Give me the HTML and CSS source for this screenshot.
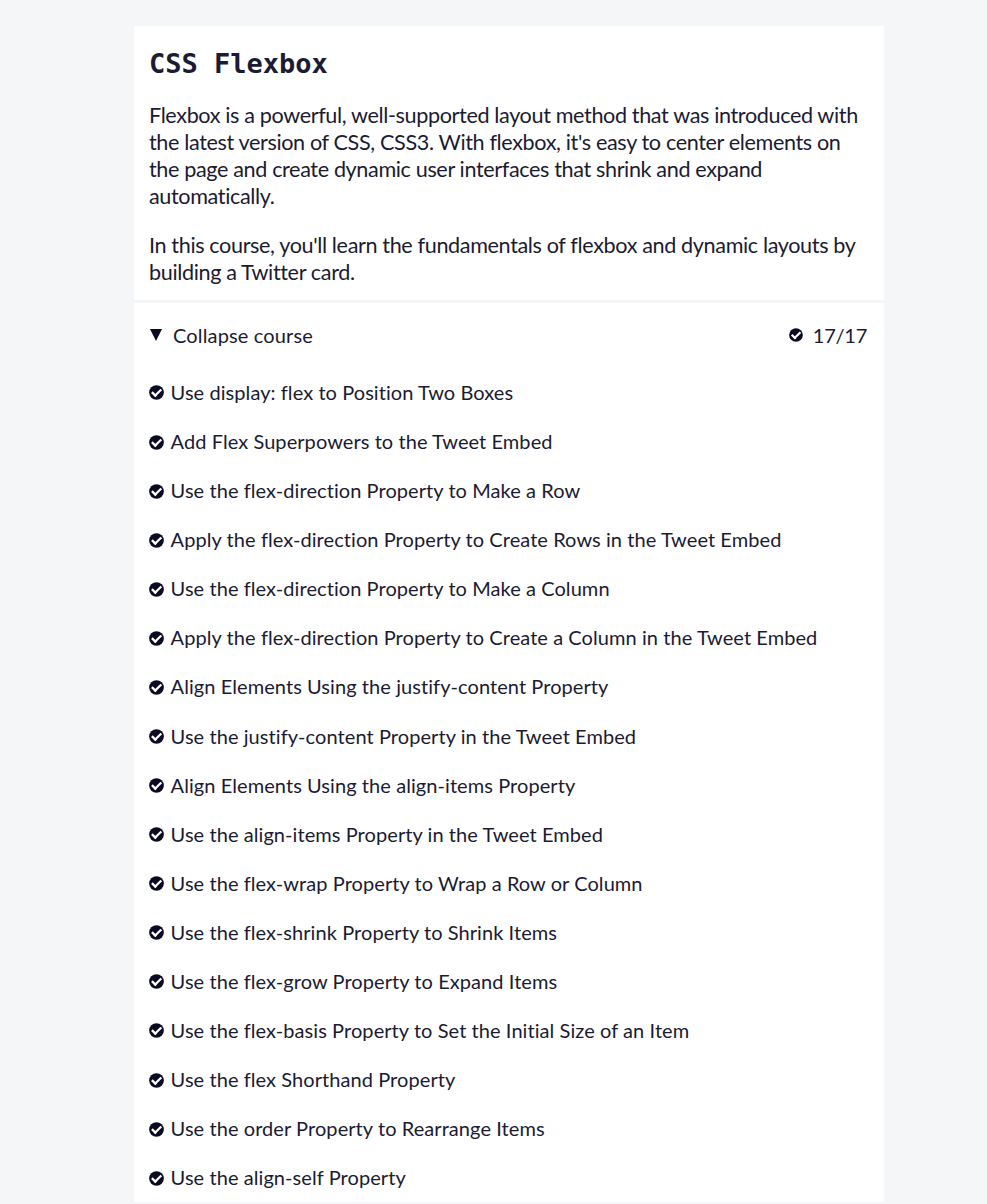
FILE: index.html
```html
<!DOCTYPE html>
<html lang="en">
<head>
<meta charset="utf-8">
<title>CSS Flexbox</title>
<link rel="stylesheet" href="styles.css">
</head>
<body>
<svg class="defs" aria-hidden="true">
<symbol id="check" viewBox="0 0 200 200"><circle cx="100" cy="100" r="98" fill="currentColor"/><g fill="#fff"><rect x="55.570" y="89.320" width="128.850" height="30" transform="rotate(-45 120 106.320)"/><rect x="51.750" y="83.420" width="30" height="80.660" transform="rotate(-45 66.750 123.750)"/></g></symbol>
</svg>
<main class="block">
<header class="intro">
<h1 class="title">CSS Flexbox</h1>
<p>Flexbox is a powerful, well-supported layout method that was introduced with the latest version of CSS, CSS3. With flexbox, it's easy to center elements on the page and create dynamic user interfaces that shrink and expand automatically.</p>
<p>In this course, you'll learn the fundamentals of flexbox and dynamic layouts by building a Twitter card.</p>
</header>
<section class="course">
<div class="toggle"><svg class="caret" viewBox="0 0 12 12"><path d="M0 0H12L6 12Z" fill="currentColor"/></svg><span class="label">Collapse course</span><span class="count"><svg class="check small"><use href="#check"/></svg><span class="label">17/17</span></span></div>
<ul class="list">
<li><svg class="check"><use href="#check"/></svg><span>Use display: flex to Position Two Boxes</span></li>
<li><svg class="check"><use href="#check"/></svg><span>Add Flex Superpowers to the Tweet Embed</span></li>
<li><svg class="check"><use href="#check"/></svg><span>Use the flex-direction Property to Make a Row</span></li>
<li><svg class="check"><use href="#check"/></svg><span>Apply the flex-direction Property to Create Rows in the Tweet Embed</span></li>
<li><svg class="check"><use href="#check"/></svg><span>Use the flex-direction Property to Make a Column</span></li>
<li><svg class="check"><use href="#check"/></svg><span>Apply the flex-direction Property to Create a Column in the Tweet Embed</span></li>
<li><svg class="check"><use href="#check"/></svg><span>Align Elements Using the justify-content Property</span></li>
<li><svg class="check"><use href="#check"/></svg><span>Use the justify-content Property in the Tweet Embed</span></li>
<li><svg class="check"><use href="#check"/></svg><span>Align Elements Using the align-items Property</span></li>
<li><svg class="check"><use href="#check"/></svg><span>Use the align-items Property in the Tweet Embed</span></li>
<li><svg class="check"><use href="#check"/></svg><span>Use the flex-wrap Property to Wrap a Row or Column</span></li>
<li><svg class="check"><use href="#check"/></svg><span>Use the flex-shrink Property to Shrink Items</span></li>
<li><svg class="check"><use href="#check"/></svg><span>Use the flex-grow Property to Expand Items</span></li>
<li><svg class="check"><use href="#check"/></svg><span>Use the flex-basis Property to Set the Initial Size of an Item</span></li>
<li><svg class="check"><use href="#check"/></svg><span>Use the flex Shorthand Property</span></li>
<li><svg class="check"><use href="#check"/></svg><span>Use the order Property to Rearrange Items</span></li>
<li><svg class="check"><use href="#check"/></svg><span>Use the align-self Property</span></li>
</ul>
</section>
</main>
</body>
</html>
```
FILE: styles.css
```css
* { box-sizing: border-box; }
body {
  margin: 0;
  height: 1204px;
  overflow: hidden;
  background: #f5f6f7;
  color: #1b1b32;
  font-family: Lato, sans-serif;
}
.defs { display: none; }
.block { width: 750px; margin: 26px auto 0 134px; }
.intro { height: 274px; padding: 21px 15px 0; background: #fff; }
.title {
  margin: 0 0 21px;
  font: bold 27px/34px "DejaVu Sans Mono", monospace;
}
.intro p { margin: 0 0 22px; font-size: 21.600px; line-height: 27px; letter-spacing: -0.370px; }
.course { margin-top: 3px; height: 899px; background: #fff; font-size: 20px; letter-spacing: 0.070px; }
.toggle { display: flex; align-items: center; height: 65px; padding: 0 17px 0 15px; }
.label { padding-bottom: 2px; letter-spacing: 0.150px; }
.caret { width: 12px; height: 12px; margin: 0 11px 1px 1px; color: #0a0a23; }
.count { display: flex; align-items: center; gap: 10px; margin-left: auto; }
.count .label { letter-spacing: -0.250px; }
.check { width: 15px; height: 15px; color: #0a0a23; }
.check.small { width: 14px; height: 14px; margin-bottom: 1px; }
.list { margin: 0; padding: 0.450px 15px 0; list-style: none; }
.list li { display: flex; align-items: center; gap: 6.600px; height: 49.080px; }
.list span { padding-bottom: 2px; }
```
